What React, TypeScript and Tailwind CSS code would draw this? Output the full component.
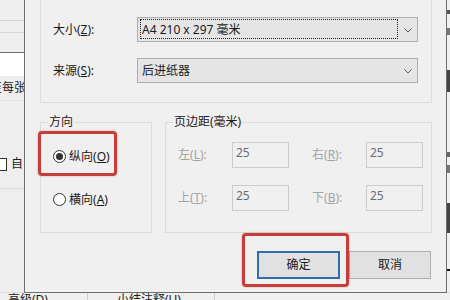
const Radio = ({ checked, label, k }: { checked?: boolean; label: string; k: string }) => (
  <div className="flex items-center h-[13px]">
    <div className="w-[13px] h-[13px] rounded-full border border-[#333] bg-white flex items-center justify-center">
      {checked && <div className="w-[7px] h-[7px] rounded-full bg-[#333]"></div>}
    </div>
    <span className="ml-[3px] text-[12px] leading-[13px] text-[#1a1a1a]">
      {label}(<span className="underline">{k}</span>)
    </span>
  </div>
);

const Select = ({ text, focused }: { text: string; focused?: boolean }) => (
  <div className="relative w-[281px] h-[25px] bg-[#e5e5e5] border border-[#adadad] flex items-center">
    {focused && (
      <div className="absolute left-[2px] top-[1px] right-[19px] bottom-[2px] border border-dotted border-[#222]"></div>
    )}
    <span className="pl-[4px] text-[12px] leading-[16px] text-[#1a1a1a]">{text}</span>
    <svg className="absolute right-[5px] top-[10px]" width="8" height="5" viewBox="0 0 8 5">
      <path d="M0.5 0.5 L4 4 L7.5 0.5" fill="none" stroke="#5a5a5a" strokeWidth="1" />
    </svg>
  </div>
);

const MarginField = ({ label, k }: { label: string; k: string }) => (
  <>
    <span className="text-[12px] leading-[26px] text-[#a3a3a3]">
      {label}(<span className="underline">{k}</span>):
    </span>
    <div className="w-[57px] h-[26px] border border-[#cccccc] bg-[#f0f0f0] pl-[3px] pt-[3px] text-[12px] leading-[14px] text-[#6d6d6d]">
      25
    </div>
  </>
);

export default function App() {
  return (
    <div className="relative w-[450px] h-[300px] overflow-hidden bg-[#f0f0f0] font-['Noto_Sans','Noto_Sans_CJK_SC',sans-serif] text-[#1a1a1a]">
      {/* window behind the dialog */}
      <div className="flex flex-col h-full">
        <div className="flex h-[292px]">
          <div className="w-[24px] flex flex-col text-[12px] bg-[#eeeeee]">
            <div className="h-[20px]"></div>
            <div className="h-[12px] border-t border-[#d6d6d6]"></div>
            <div className="h-[20px] border-t border-[#d6d6d6]"></div>
            <div className="h-[24px] border-t border-[#6f6f6f] bg-white"></div>
            <div className="h-[24px] whitespace-nowrap -ml-[10px] pt-[4px] leading-[16px]">至每张</div>
            <div className="h-[56px] border-t border-[#e2e2e2]"></div>
            <div className="h-[32px] flex items-start whitespace-nowrap">
              <div className="-ml-[6px] w-[13px] h-[13px] border border-[#333] bg-white mt-[2px]"></div>
              <span className="ml-[4px] leading-[16px]">自</span>
            </div>
            <div className="flex-1 border-t border-[#dcdcdc]"></div>
          </div>
          <div className="flex-1"></div>
          <div className="w-[4px] flex flex-col">
            <div className="h-[10px]"></div>
            <div className="h-[4px] bg-[#555]"></div>
            <div className="h-[14px]"></div>
            <div className="h-[7px] bg-[#777]"></div>
            <div className="h-[35px]"></div>
            <div className="h-[22px] bg-[#444]"></div>
            <div className="h-[60px]"></div>
            <div className="h-[5px] bg-[#666]"></div>
            <div className="h-[8px]"></div>
            <div className="h-[8px] bg-[#777]"></div>
            <div className="h-[30px]"></div>
            <div className="h-[30px] bg-[#444]"></div>
            <div className="h-[36px]"></div>
            <div className="h-[2px] bg-[#111]"></div>
          </div>
        </div>
        <div className="flex h-[8px] border-t border-[#dcdcdc] text-[12px] leading-[14px] whitespace-nowrap">
          <div className="w-[88px] pl-[8px] border-r border-[#cfcfcf]">高级(D)</div>
          <div className="w-[127px] pl-[29px] border-r border-[#cfcfcf]">小结注释(U)</div>
        </div>
      </div>

      {/* page setup dialog */}
      <div className="absolute left-[24px] top-0 w-[423px] h-[293px] bg-[#f0f0f0] border-x border-b border-[#6e6e6e] pl-[15px] flex flex-col">
        <div className="w-[392px] h-[103px] border-x border-b border-[#dcdcdc] pl-[12px] pt-[17px]">
          <div className="flex items-center">
            <span className="w-[84px] text-[12px] leading-[16px]">
              大小(<span className="underline">Z</span>):
            </span>
            <Select text="A4 210 x 297 毫米" focused />
          </div>
          <div className="flex items-center mt-[16px]">
            <span className="w-[84px] text-[12px] leading-[16px]">
              来源(<span className="underline">S</span>):
            </span>
            <Select text="后进纸器" />
          </div>
        </div>

        <div className="flex mt-[19px] gap-[13px]">
          <div className="relative w-[112px] h-[111px] border border-[#dcdcdc] pl-[12px] pt-[27px] flex flex-col gap-[30px]">
            <span className="absolute -top-[9px] left-[7px] px-[1px] bg-[#f0f0f0] text-[12px] leading-[16px]">方向</span>
            <Radio checked label="纵向" k="O" />
            <Radio label="横向" k="A" />
            <div className="absolute left-[-3px] top-[8px] w-[79px] h-[45px] border-[3px] border-[#c43f39] rounded-[4px] shadow-[0_0_2px_rgba(196,63,57,0.5)]"></div>
          </div>
          <div className="relative w-[267px] h-[111px] border border-[#dcdcdc] pl-[12px] pt-[19px]">
            <span className="absolute -top-[9px] left-[7px] px-[1px] bg-[#f0f0f0] text-[12px] leading-[16px]">页边距(毫米)</span>
            <div className="grid grid-cols-[54px_80px_54px_57px] gap-y-[17px]">
              <MarginField label="左" k="L" />
              <MarginField label="右" k="R" />
              <MarginField label="上" k="T" />
              <MarginField label="下" k="B" />
            </div>
          </div>
        </div>

        <div className="flex justify-end gap-[9px] pr-[15px] mt-[18px]">
          <div className="relative">
            <div className="w-[83px] h-[28px] bg-[#e1e1e1] border-2 border-[#2d6fae] flex items-center justify-center text-[12px]">
              确定
            </div>
            <div className="absolute -left-[15px] -top-[18px] w-[107px] h-[54px] border-[3px] border-[#c43f39] rounded-[4px] shadow-[0_0_2px_rgba(196,63,57,0.5)]"></div>
          </div>
          <div className="w-[82px] h-[28px] bg-[#e1e1e1] border border-[#adadad] flex items-center justify-center text-[12px]">
            取消
          </div>
        </div>
      </div>
    </div>
  );
}
